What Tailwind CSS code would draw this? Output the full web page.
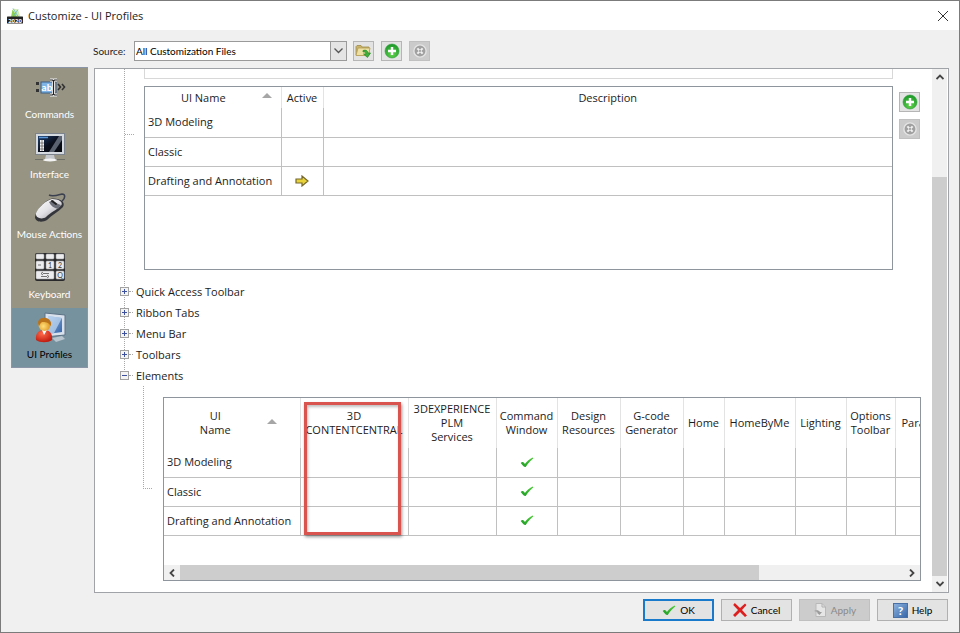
<!DOCTYPE html>
<html lang="en">

<head>
	<meta charset="UTF-8">
	<meta name="viewport" content="width=device-width, initial-scale=1.0">
	<title>Customize - UI Profiles</title>
	<script src="https://cdn.jsdelivr.net/npm/@tailwindcss/browser@4"></script>
</head>

<body class="min-h-screen flex flex-col bg-[#f0f0f0] border border-[#7b7b7b] font-['Open_Sans','Noto_Sans',sans-serif] text-[11px] leading-[14px] text-[#1c1c1c]">

	<!-- Shared icons -->
	<svg class="absolute w-0 h-0">
		<defs>
			<radialGradient id="green" cx="50%" cy="75%" r="70%">
				<stop offset="0" stop-color="#5fd24a" />
				<stop offset="1" stop-color="#1f9a2b" />
			</radialGradient>
			<linearGradient id="tick" x1="0" y1="1" x2="1" y2="0">
				<stop offset="0" stop-color="#1d9a24" />
				<stop offset="1" stop-color="#4fd03a" />
			</linearGradient>
			<linearGradient id="silver" x1="0" y1="0" x2="1" y2="1">
				<stop offset="0" stop-color="#ffffff" />
				<stop offset="0.5" stop-color="#e2e2e6" />
				<stop offset="1" stop-color="#8f8f94" />
			</linearGradient>
			<linearGradient id="screen" x1="0" y1="0" x2="1" y2="1">
				<stop offset="0" stop-color="#1d3f6e" />
				<stop offset="0.5" stop-color="#0a0f1c" />
				<stop offset="1" stop-color="#05070d" />
			</linearGradient>
			<linearGradient id="blue" x1="0" y1="0" x2="1" y2="1">
				<stop offset="0" stop-color="#8fb4e0" />
				<stop offset="1" stop-color="#3565a8" />
			</linearGradient>
			<radialGradient id="red" cx="40%" cy="30%" r="70%">
				<stop offset="0" stop-color="#ff6a4a" />
				<stop offset="1" stop-color="#c01c10" />
			</radialGradient>
			<radialGradient id="skin" cx="40%" cy="60%" r="60%">
				<stop offset="0" stop-color="#ffe07a" />
				<stop offset="1" stop-color="#dd9420" />
			</radialGradient>
		</defs>
		<symbol id="icon-add" viewBox="0 0 16 16">
			<circle cx="8" cy="8" r="7" fill="url(#green)" stroke="#2f9e3a" stroke-width="0.6" />
			<path d="M8 4v8M4 8h8" stroke="#fff" stroke-width="2.4" />
		</symbol>
		<symbol id="icon-delete" viewBox="0 0 16 16">
			<circle cx="8" cy="8" r="7" fill="#a0a0a0" stroke="#e4e4e4" stroke-width="1.6" />
			<path d="M5 5l6 6M11 5l-6 6" stroke="#f2f2f2" stroke-width="2.4" />
			<circle cx="8" cy="8" r="1.3" fill="#a8a8a8" />
		</symbol>
		<symbol id="icon-check" viewBox="0 0 16 12">
			<path d="M0.8 6.500C2.500 4.800 4 5.400 5.600 7.600C8 4.600 11 2 14.500 0.400L15.200 1.400C12 4 9 7 6.500 11.200C4.800 11.600 3 9.200 0.800 6.500Z" fill="url(#tick)" />
		</symbol>
		<symbol id="icon-plus" viewBox="0 0 9 9">
			<rect x="0.5" y="0.5" width="8" height="8" fill="#f4f4f4" stroke="#a2a2a2" />
			<path d="M2 4.500h5M4.500 2v5" stroke="#3d50a0" />
		</symbol>
		<symbol id="icon-minus" viewBox="0 0 9 9">
			<rect x="0.5" y="0.5" width="8" height="8" fill="#f4f4f4" stroke="#a2a2a2" />
			<path d="M2 4.500h5" stroke="#3d50a0" />
		</symbol>
		<symbol id="icon-sort" viewBox="0 0 10 5">
			<path d="M5 0L10 5H0Z" fill="#a6a6a6" />
		</symbol>
	</svg>

	<!-- Title bar -->
	<header class="h-[29px] shrink-0 bg-white flex items-center pl-[6px] pr-[10px]">
		<svg class="w-4 h-4 mr-[5px]" viewBox="0 0 16 16">
			<path d="M4 9L5.500 1.500L8 5L11 9Z" fill="#8ccf4d" />
			<path d="M6 0.500L11 1.500L13.500 9H10Z" fill="#d3ecb0" />
			<path d="M6 0.500L11.500 9M11 1.500L6 9" stroke="#5fb8c8" stroke-width="0.800" />
			<rect x="0" y="8.500" width="16" height="7" rx="0.5" fill="#222" />
			<text x="8" y="14.500" font-size="6" font-weight="700" fill="#fff" text-anchor="middle">2020</text>
		</svg>
		<h1>Customize - UI Profiles</h1>
		<button type="button" aria-label="Close" class="ml-auto">
			<svg class="w-3 h-3" viewBox="0 0 12 12"><path d="M1 1l10 10M11 1L1 11" stroke="#333" /></svg>
		</button>
	</header>

	<!-- Source -->
	<div class="flex items-center mt-[11px] pl-[92px] font-['Lato','Open_Sans',sans-serif] text-[10px]">
		<label for="source" class="w-[41px]">Source:</label>
		<div class="relative w-[213px] h-5">
			<select id="source" class="w-full h-5 appearance-none bg-white border border-[#9a9a9a] pl-px leading-[14px] text-black">
				<option>All Customization Files</option>
			</select>
			<span class="absolute right-0 top-0 w-[17px] h-5 bg-[#e4e4e4] border border-[#9a9a9a] flex items-center justify-center pointer-events-none">
				<svg class="w-[9px] h-[6px]" viewBox="0 0 9 6"><path d="M0.500 0.500l4 4l4-4" fill="none" stroke="#555" stroke-width="1.300" /></svg>
			</span>
		</div>
		<button type="button" aria-label="Load file" class="w-[21px] h-5 ml-[6px] bg-[#e3e3e3] border border-[#b5b5b5] flex items-center justify-center">
			<svg class="w-[17px] h-4" viewBox="0 0 17 16">
				<path d="M1 12V3.500L2 2.500H6L7 4H14V12Z" fill="#c9b26a" stroke="#a08c48" stroke-width="0.800" />
				<path d="M3 5H15L13.500 12.500H1Z" fill="#eee0a2" stroke="#b39c55" stroke-width="0.800" />
				<path d="M8 7.500C11 6.500 12.500 7.500 13 10H15.500L12.500 14.500L8.500 11H11C10.500 9 9.500 8.500 8 9Z" fill="#3fae3a" stroke="#2a8a2a" stroke-width="0.700" />
			</svg>
		</button>
		<button type="button" aria-label="Add file" class="w-[21px] h-5 ml-[7px] bg-[#e3e3e3] border border-[#b5b5b5] flex items-center justify-center">
			<svg class="w-4 h-4"><use href="#icon-add" /></svg>
		</button>
		<button type="button" aria-label="Remove file" disabled class="w-[21px] h-5 ml-[7px] bg-[#cbcbcb] border border-[#c0c0c0] flex items-center justify-center">
			<svg class="w-[14px] h-[14px]"><use href="#icon-delete" /></svg>
		</button>
	</div>

	<div class="flex-1 flex items-start mt-[6px] pl-[10px] pr-[10px]">

		<!-- Sidebar -->
		<nav class="w-[77px] shrink-0 border border-[#8a96a8] bg-[#979484] font-['Lato','Open_Sans',sans-serif] text-[10px] text-white text-center">
			<a href="#" class="h-[60px] flex flex-col items-center pt-[3px]">
				<svg class="w-8 h-8" viewBox="0 0 32 32">
					<rect x="2" y="11" width="3" height="3" fill="#333" />
					<rect x="2" y="18" width="3" height="3" fill="#333" />
					<rect x="7" y="11" width="15" height="11" fill="#7fb5e6" stroke="#3a5e86" />
					<text x="13" y="20" font-size="10" font-weight="700" fill="#fff" text-anchor="middle">ab</text>
					<path d="M16 9H18.500L19.500 10L20.500 9H23M19.500 10V23M16 24H18.500L19.500 23L20.500 24H23" fill="none" stroke="#f4f4f4" stroke-width="3" />
					<path d="M16 9H18.500L19.500 10L20.500 9H23M19.500 10V23M16 24H18.500L19.500 23L20.500 24H23" fill="none" stroke="#222" stroke-width="1.200" />
					<path d="M24 13l2.500 3l-2.500 3M28 13l2.500 3l-2.500 3" fill="none" stroke="#333" stroke-width="1.600" />
				</svg>
				<span class="mt-1">Commands</span>
			</a>
			<a href="#" class="h-[60px] flex flex-col items-center pt-[3px]">
				<svg class="w-8 h-8" viewBox="0 0 32 32">
					<rect x="1.500" y="2.500" width="29" height="21" fill="#d5dae0" stroke="#7c838c" />
					<rect x="4" y="5" width="24" height="16" fill="url(#screen)" />
					<path d="M15 21L25 5H28V9L20 21Z" fill="#7e8797" opacity="0.700" />
					<path d="M5 6.500H14" stroke="#5b96d8" stroke-width="1.500" />
					<rect x="6" y="9" width="4" height="11" fill="#f4f4f4" />
					<path d="M6 12h4M6 15h4M6 18h4M8 9v11" stroke="#555" stroke-width="0.700" />
					<path d="M12 24H20L21 28H11Z" fill="#c4c8cd" />
					<path d="M1 28.500H31" stroke="#6f7068" />
					<ellipse cx="16" cy="29" rx="7" ry="1.500" fill="#f3f3f3" />
				</svg>
				<span class="mt-1">Interface</span>
			</a>
			<a href="#" class="h-[60px] flex flex-col items-center pt-[3px]">
				<svg class="w-8 h-8" viewBox="0 0 32 32">
					<path d="M15 4C19 6 24 4 28 3C32 3 31 8 28 10" fill="none" stroke="#3c4150" stroke-width="1.600" />
					<path d="M1 26C2 19 11 9 18 7.500C26 7 32 11 29 16C24 21 18 24 13 29C8 32 1 31 1 26Z" fill="#34353a" />
					<path d="M2 22C4 17 12 9 18 8C25 8 29 11 27.500 14C23 19 17 21 12 26C8 29 1 27 2 22Z" fill="url(#silver)" />
					<path d="M19 9C21 12 24 13 27 14L24 18C20 17 17 15 15 11Z" fill="#6d6f78" />
					<path d="M18 10L22 13" stroke="#222" stroke-width="2" stroke-linecap="round" />
				</svg>
				<span class="mt-1">Mouse Actions</span>
			</a>
			<a href="#" class="h-[60px] flex flex-col items-center pt-[3px]">
				<svg class="w-8 h-8" viewBox="0 0 32 32">
					<rect x="1" y="2" width="30" height="28" rx="2" fill="#29292b" />
					<g fill="#ececee" stroke="#a4a4a8" stroke-width="0.600">
						<rect x="2" y="3" width="8" height="5" rx="1" />
						<rect x="12" y="3" width="8" height="5" rx="1" />
						<rect x="22" y="3" width="8" height="5" rx="1" />
						<rect x="2" y="10" width="8" height="8" rx="1" />
						<rect x="12" y="10" width="8" height="8" rx="1" />
						<rect x="22" y="10" width="8" height="8" rx="1" />
						<rect x="2" y="20" width="18" height="8" rx="1" />
						<rect x="22" y="20" width="8" height="8" rx="1" />
					</g>
					<path d="M4 14h3M9 22.500h6M7 25.500h6M9 21l-2 1.500l2 1.500M13 24l2 1.500l-2 1.500" stroke="#555" fill="none" stroke-width="0.800" />
					<g font-size="7" fill="#333" text-anchor="middle">
						<text x="16" y="16.500">1</text>
						<text x="26" y="16.500">2</text>
						<text x="26" y="26.500">Q</text>
					</g>
				</svg>
				<span class="mt-1">Keyboard</span>
			</a>
			<a href="#" class="h-[59px] flex flex-col items-center pt-[3px] bg-[#76929f] text-black">
				<svg class="w-8 h-8" viewBox="0 0 32 32">
					<path d="M11 2L31 4V24L11 26Z" fill="#d9e2ec" stroke="#5b7286" />
					<path d="M14 5L28 7V21L14 23Z" fill="url(#blue)" />
					<path d="M14 5L28 7L20 22L14 23Z" fill="#d6e8fa" opacity="0.600" />
					<path d="M18 27L28 25L31 28L22 31Z" fill="#b8c4ce" />
					<path d="M2 29C1 22 5 19 10 19C15 19 19 22 18 29C14 32 6 32 2 29Z" fill="url(#red)" />
					<path d="M8 19L10 24L13 19Z" fill="#fff" />
					<circle cx="10.500" cy="14" r="6" fill="url(#skin)" />
					<path d="M5 15C2 9 7 6 12 7C17 8 18 13 16.500 15C15 11 11 11 8 11C6 12 6 14 5 15Z" fill="#b9731a" />
				</svg>
				<span class="mt-1">UI Profiles</span>
			</a>
		</nav>

		<!-- Main panel -->
		<main class="flex-1 min-w-0 self-stretch ml-[6px] mt-px flex bg-white border border-[#a0a3a8]">

			<div class="flex-1 min-w-0 pb-[11px]">
				<div class="relative">
					<span class="absolute left-[29px] top-0 bottom-[10px] border-l border-dotted border-[#a8a8a8]"></span>
					<span class="absolute left-[30px] top-[65px] w-[9px] border-t border-dotted border-[#a8a8a8]"></span>

					<div class="ml-[49px] mr-[39px] h-[10px] border-x border-b border-[#d8d8d8]"></div>

					<div class="flex items-start mt-[7px] pl-[49px]">
						<div class="flex-1 h-[184px] border border-[#8f959c]">
							<table class="w-full table-fixed border-collapse">
								<colgroup>
									<col class="w-[136px]">
									<col class="w-[42px]">
									<col>
								</colgroup>
								<thead>
									<tr class="h-[21px]">
										<th class="p-0 font-normal border-r border-[#e3e3e3]">
											<div class="flex items-center pr-[9px]">
												<span class="flex-1">UI Name</span>
												<svg class="w-[10px] h-[5px] mb-1"><use href="#icon-sort" /></svg>
											</div>
										</th>
										<th class="p-0 font-normal border-r border-[#e3e3e3]">Active</th>
										<th class="p-0 font-normal">Description</th>
									</tr>
								</thead>
								<tbody>
									<tr class="h-[29px]">
										<td class="p-0 pl-[3px] border-r border-b border-[#c0c0c0]">3D Modeling</td>
										<td class="p-0 border-r border-b border-[#c0c0c0]"></td>
										<td class="p-0 border-b border-[#c0c0c0]"></td>
									</tr>
									<tr class="h-[29px]">
										<td class="p-0 pl-[3px] border-r border-b border-[#c0c0c0]">Classic</td>
										<td class="p-0 border-r border-b border-[#c0c0c0]"></td>
										<td class="p-0 border-b border-[#c0c0c0]"></td>
									</tr>
									<tr class="h-[29px]">
										<td class="p-0 pl-[3px] border-r border-b border-[#c0c0c0] whitespace-nowrap">Drafting and Annotation</td>
										<td class="p-0 border-r border-b border-[#c0c0c0]">
											<svg class="w-[14px] h-3 mx-auto" viewBox="0 0 14 12"><path d="M1 4H7V1L13 6L7 11V8H1Z" fill="#e8d23a" stroke="#75682a" stroke-width="1.200" /></svg>
										</td>
										<td class="p-0 border-b border-[#c0c0c0]"></td>
									</tr>
								</tbody>
							</table>
						</div>
						<div class="w-[39px] pl-[6px] pt-[6px] flex flex-col gap-[7px]">
							<button type="button" aria-label="Add profile" class="w-[21px] h-5 bg-[#e3e3e3] border border-[#b5b5b5] flex items-center justify-center">
								<svg class="w-4 h-4"><use href="#icon-add" /></svg>
							</button>
							<button type="button" aria-label="Remove profile" disabled class="w-[21px] h-5 bg-[#cbcbcb] border border-[#c0c0c0] flex items-center justify-center">
								<svg class="w-[14px] h-[14px]"><use href="#icon-delete" /></svg>
							</button>
						</div>
					</div>

					<!-- Tree -->
					<ul class="relative mt-[11px] pl-[25px]">
						<li class="h-[21px] flex items-center">
							<button type="button" aria-label="Expand"><svg class="w-[9px] h-[9px]"><use href="#icon-plus" /></svg></button>
							<span class="w-1 mr-[3px] border-t border-dotted border-[#a8a8a8]"></span>Quick Access Toolbar
						</li>
						<li class="h-[21px] flex items-center">
							<button type="button" aria-label="Expand"><svg class="w-[9px] h-[9px]"><use href="#icon-plus" /></svg></button>
							<span class="w-1 mr-[3px] border-t border-dotted border-[#a8a8a8]"></span>Ribbon Tabs
						</li>
						<li class="h-[21px] flex items-center">
							<button type="button" aria-label="Expand"><svg class="w-[9px] h-[9px]"><use href="#icon-plus" /></svg></button>
							<span class="w-1 mr-[3px] border-t border-dotted border-[#a8a8a8]"></span>Menu Bar
						</li>
						<li class="h-[21px] flex items-center">
							<button type="button" aria-label="Expand"><svg class="w-[9px] h-[9px]"><use href="#icon-plus" /></svg></button>
							<span class="w-1 mr-[3px] border-t border-dotted border-[#a8a8a8]"></span>Toolbars
						</li>
						<li class="h-[21px] flex items-center">
							<button type="button" aria-label="Collapse"><svg class="w-[9px] h-[9px]"><use href="#icon-minus" /></svg></button>
							<span class="w-1 mr-[3px] border-t border-dotted border-[#a8a8a8]"></span>Elements
						</li>
					</ul>
				</div>

				<!-- Elements -->
				<div class="flex items-start pl-12 pr-[11px]">
					<div class="w-[9px] h-[103px] mr-[11px] border-l border-b border-dotted border-[#a8a8a8]"></div>
					<div class="flex-1 min-w-0 mt-[11px] border border-[#8f959c]">
						<div class="relative h-[167px] overflow-hidden">
							<table class="w-[799px] table-fixed border-collapse">
								<colgroup>
									<col class="w-[136px]">
									<col class="w-[108px]">
									<col class="w-[88px]">
									<col class="w-[61px]">
									<col class="w-[63px]">
									<col class="w-[63px]">
									<col class="w-[41px]">
									<col class="w-[71px]">
									<col class="w-[51px]">
									<col class="w-[49px]">
									<col class="w-[68px]">
								</colgroup>
								<thead>
									<tr class="h-[50px]">
										<th class="p-0 font-normal border-r border-[#e3e3e3]">
											<div class="flex items-center pr-[23px]">
												<span class="flex-1">UI<br>Name</span>
												<svg class="w-[10px] h-[5px] mb-1"><use href="#icon-sort" /></svg>
											</div>
										</th>
										<th class="p-0 font-normal border-r border-[#e3e3e3]">3D<br>CONTENTCENTRAL</th>
										<th class="p-0 font-normal border-r border-[#e3e3e3]">3DEXPERIENCE<br>PLM<br>Services</th>
										<th class="p-0 font-normal border-r border-[#e3e3e3]">Command<br>Window</th>
										<th class="p-0 font-normal border-r border-[#e3e3e3]">Design<br>Resources</th>
										<th class="p-0 font-normal border-r border-[#e3e3e3]">G-code<br>Generator</th>
										<th class="p-0 font-normal border-r border-[#e3e3e3]">Home</th>
										<th class="p-0 font-normal border-r border-[#e3e3e3]">HomeByMe</th>
										<th class="p-0 font-normal border-r border-[#e3e3e3]">Lighting</th>
										<th class="p-0 font-normal border-r border-[#e3e3e3]">Options<br>Toolbar</th>
										<th class="p-0 pl-[6px] font-normal text-left">Parametric</th>
									</tr>
								</thead>
								<tbody id="elementRows"></tbody>
							</table>
							<!-- Highlighted column -->
							<div class="absolute left-[140px] top-1 w-[97px] h-[133px] border-[3px] border-[#d9534f] shadow-[1px_2px_3px_rgba(0,0,0,0.4),inset_1px_2px_3px_rgba(0,0,0,0.25)]"></div>
						</div>
						<div class="h-[15px] flex bg-[#f0f0f0]">
							<button type="button" aria-label="Scroll left" class="w-4 flex items-center justify-center">
								<svg class="w-[6px] h-2" viewBox="0 0 6 8"><path d="M5 0.500L1.500 4L5 7.500" fill="none" stroke="#444" stroke-width="1.800" /></svg>
							</button>
							<div class="flex-1"><div class="w-4/5 h-full bg-[#cdcdcd]"></div></div>
							<button type="button" aria-label="Scroll right" class="w-4 flex items-center justify-center">
								<svg class="w-[6px] h-2" viewBox="0 0 6 8"><path d="M1 0.500L4.500 4L1 7.500" fill="none" stroke="#444" stroke-width="1.800" /></svg>
							</button>
						</div>
					</div>
				</div>
			</div>

			<!-- Vertical scrollbar -->
			<div class="w-[15px] mr-px flex flex-col bg-[#f0f0f0]">
				<button type="button" aria-label="Scroll up" class="h-4 flex items-center justify-center">
					<svg class="w-2 h-[6px]" viewBox="0 0 8 6"><path d="M0.500 5L4 1.500L7.500 5" fill="none" stroke="#444" stroke-width="1.800" /></svg>
				</button>
				<div class="flex-1 pt-[92px]"><div class="h-full bg-[#cdcdcd]"></div></div>
				<button type="button" aria-label="Scroll down" class="h-4 flex items-center justify-center">
					<svg class="w-2 h-[6px]" viewBox="0 0 8 6"><path d="M0.500 1L4 4.500L7.500 1" fill="none" stroke="#444" stroke-width="1.800" /></svg>
				</button>
			</div>
		</main>
	</div>

	<!-- Buttons -->
	<footer class="flex justify-end gap-[7px] mt-[6px] mb-[11px] pr-[11px] font-['Lato','Open_Sans',sans-serif] text-[10px] text-black">
		<button type="button" class="w-[71px] h-[22px] bg-[#e3e3e3] border-2 border-[#1979ca] flex items-center justify-center gap-1">
			<svg class="w-[14px] h-[11px]"><use href="#icon-check" /></svg>OK
		</button>
		<button type="button" class="w-[71px] h-[22px] bg-[#e3e3e3] border border-[#b0b0b0] flex items-center justify-center gap-1">
			<svg class="w-[14px] h-[14px]" viewBox="0 0 14 14"><path d="M1.800 0L7 5L12 0.500L13.500 2L9 7L14 12.500L12 14L7 9L2 14L0 12L5 7L0.200 2Z" fill="#dd1f1f" /></svg>Cancel
		</button>
		<button type="button" disabled class="w-[71px] h-[22px] bg-[#cccccc] border border-[#c0c0c0] flex items-center justify-center gap-1 text-[#8a8a8a]">
			<svg class="w-[14px] h-[14px]" viewBox="0 0 14 14">
				<path d="M3 0.500H9L12.500 4V13.500H3Z" fill="#e6e6e6" stroke="#b9b9b9" />
				<path d="M9 0.500V4H12.500" fill="none" stroke="#b0b0b0" />
				<path d="M1 8C3 6.500 6 7 7 9H9L6.500 12L3.500 9.500H5C4 8.500 2.500 8.500 1 8Z" fill="#9c9c9c" />
			</svg>Apply
		</button>
		<button type="button" class="w-[71px] h-[22px] bg-[#e3e3e3] border border-[#b0b0b0] flex items-center justify-center gap-1">
			<svg class="w-[15px] h-[15px]" viewBox="0 0 15 15">
				<rect x="0.500" y="0.500" width="14" height="14" fill="url(#blue)" stroke="#4a70a8" />
				<text x="7.500" y="12" font-size="12" font-weight="700" fill="#fff" text-anchor="middle">?</text>
			</svg>Help
		</button>
	</footer>

	<script>
		var profiles = ["3D Modeling", "Classic", "Drafting and Annotation"];
		var check = '<svg class="w-[14px] h-[11px] mx-auto"><use href="#icon-check" /></svg>';
		var html = "";
		profiles.forEach(function (name) {
			html += '<tr class="h-[29px]"><td class="p-0 pl-[3px] border-r border-b border-[#c0c0c0] whitespace-nowrap">' + name + '</td>';
			for (var i = 1; i <= 10; i++) {
				html += '<td class="p-0 border-r border-b border-[#c0c0c0]">' + (i === 3 ? check : '') + '</td>';
			}
			html += '</tr>';
		});
		document.getElementById("elementRows").innerHTML = html;
	</script>
</body>

</html>
